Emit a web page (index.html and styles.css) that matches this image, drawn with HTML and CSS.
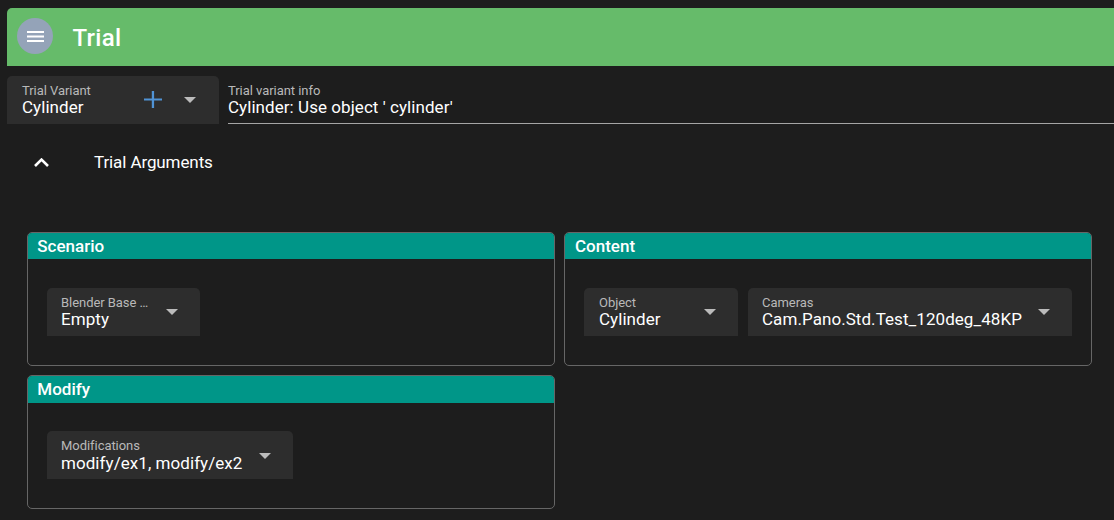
FILE: index.html
```html
<!DOCTYPE html>
<html lang="en">
<head>
<meta charset="utf-8">
<title>Trial</title>
<link rel="stylesheet" href="styles.css">
</head>
<body>
<svg class="defs" width="0" height="0">
  <symbol id="caret" viewBox="0 0 12 6"><path d="M0 0h12L6 6z" fill="currentColor"/></symbol>
</svg>
<header class="toolbar">
  <button class="menu" aria-label="Menu"><svg width="18" height="12" viewBox="0 0 18 12"><path d="M1 0h17v2H1zM1 4.5h17v2H1zM1 9h17v2H1z" fill="#fff"/></svg></button>
  <h1 class="title">Trial</h1>
</header>
<section class="variant">
  <div class="field field-variant">
    <div class="texts"><span class="label">Trial Variant</span><span class="value">Cylinder</span></div>
    <svg class="plus" width="18" height="18" viewBox="0 0 18 18"><path d="M7.8 0h2.3v7.4H18v2.2h-7.9V17H7.8V9.6H0V7.4h7.8z" fill="#5093d5"/></svg>
    <svg class="caret" width="12" height="6"><use href="#caret"/></svg>
  </div>
  <div class="info"><span class="label">Trial variant info</span><span class="value">Cylinder: Use object ' cylinder'</span></div>
</section>
<section class="arguments">
  <svg class="chevron" width="15" height="9" viewBox="0 0 15 9"><path d="M1 8l6.5-6.4L14 8" fill="none" stroke="#fff" stroke-width="2.6"/></svg>
  <span class="heading">Trial Arguments</span>
</section>
<main class="cards">
  <article class="card">
    <h2 class="card-title">Scenario</h2>
    <div class="card-body">
      <div class="field field-base"><div class="texts"><span class="label">Blender Base …</span><span class="value">Empty</span></div><svg class="caret" width="12" height="6"><use href="#caret"/></svg></div>
    </div>
  </article>
  <article class="card">
    <h2 class="card-title card-title-content">Content</h2>
    <div class="card-body">
      <div class="field field-object"><div class="texts"><span class="label">Object</span><span class="value">Cylinder</span></div><svg class="caret" width="12" height="6"><use href="#caret"/></svg></div>
      <div class="field field-cameras"><div class="texts"><span class="label">Cameras</span><span class="value">Cam.Pano.Std.Test_120deg_48KP</span></div><svg class="caret" width="12" height="6"><use href="#caret"/></svg></div>
    </div>
  </article>
  <article class="card">
    <h2 class="card-title card-title-tall">Modify</h2>
    <div class="card-body card-body-modify">
      <div class="field field-modify"><div class="texts"><span class="label">Modifications</span><span class="value">modify/ex1, modify/ex2</span></div><svg class="caret" width="12" height="6"><use href="#caret"/></svg></div>
    </div>
  </article>
</main>
</body>
</html>
```
FILE: styles.css
```css
* { box-sizing: border-box; }
body {
  margin: 0;
  padding: 8px 0 0 7px;
  height: 520px;
  overflow: hidden;
  background: #1d1d1d;
  color: #fff;
  font-family: Roboto, sans-serif;
}
svg { display: block; flex: none; }
.defs { position: absolute; }
.toolbar {
  display: flex;
  align-items: center;
  height: 58px;
  padding: 0 0 2px 10px;
  background: #66bb6a;
  border-radius: 5px 0 0 0;
}
.menu {
  display: grid;
  place-items: center;
  width: 36px;
  height: 36px;
  padding: 1px 0 0;
  border: 0;
  border-radius: 50%;
  background: #94a3b8;
}
.title {
  margin: 3px 0 0 19.5px;
  font-size: 24px;
  line-height: 32px;
  font-weight: 500;
  letter-spacing: .3px;
}
.variant { display: flex; gap: 9px; margin-top: 10px; }
.field {
  display: flex;
  height: 48px;
  padding: 0 23px 0 14px;
  background: #2d2d2d;
  border-radius: 5px 5px 0 0;
}
.texts { flex: 1; display: flex; flex-direction: column; padding-top: 7px; min-width: 0; }
.label {
  color: #b9b9b9;
  font-size: 13px;
  line-height: 15px;
  letter-spacing: -.05px;
  white-space: nowrap;
}
.value {
  font-size: 17px;
  line-height: 20px;
  margin-top: -1px;
  letter-spacing: .06px;
  white-space: nowrap;
}
.caret { margin-top: 21px; color: #bbb; }
.plus { margin: 15px 22px 0 0; }
.field-variant { width: 212px; padding-left: 15px; }
.info {
  flex: 1;
  display: flex;
  flex-direction: column;
  height: 48px;
  padding-top: 7px;
  border-bottom: 1px solid #a5a5a5;
}
.arguments { display: flex; align-items: center; gap: 45px; height: 76px; padding: 0 0 0 27px; }
.heading { font-size: 17px; line-height: 20px; letter-spacing: -.1px; }
.cards {
  display: grid;
  grid-template-columns: 528px 528px;
  gap: 9px;
  margin: 32px 0 0 20px;
}
.card {
  height: 134px;
  border: 1px solid #666;
  border-radius: 5px;
  overflow: hidden;
}
.card-title {
  margin: 0;
  height: 26px;
  padding-left: 9.3px;
  background: #009688;
  font-size: 17px;
  line-height: 26px;
  font-weight: 500;
}
.card-title-content { padding-left: 10px; }
.card-title-tall { height: 27px; }
.card-body { display: flex; gap: 10px; padding: 29px 19px 0; }
.card-body-modify { padding-top: 28px; }
.field-base { width: 153px; padding-right: 22px; }
.field-object { width: 154px; padding: 0 22.5px 0 15px; }
.field-cameras { width: 324px; padding-right: 22px; }
.field-modify { width: 246px; padding-right: 22.5px; }
.field-modify .value { margin-top: 0; }
.field-modify .caret { margin-top: 22px; }
```
